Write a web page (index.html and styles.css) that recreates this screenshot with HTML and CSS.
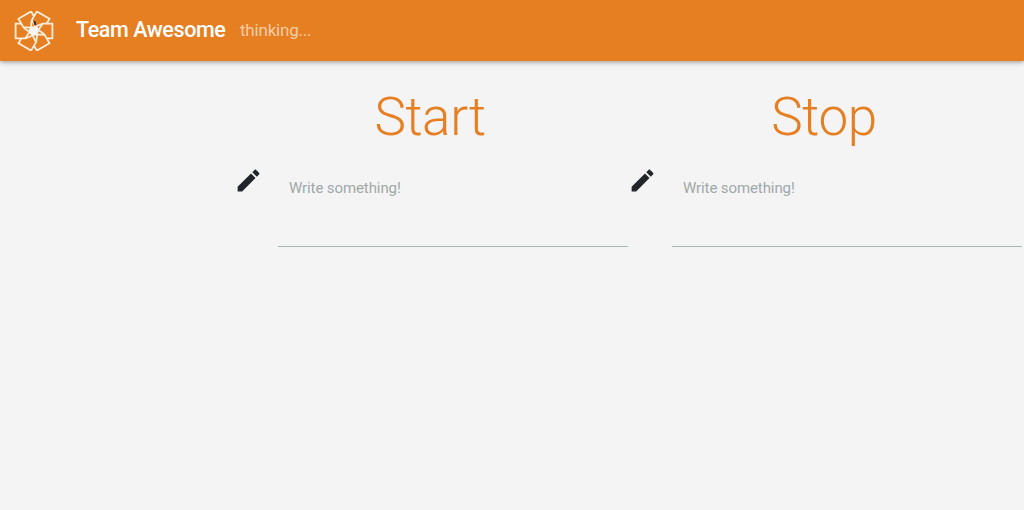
FILE: index.html
```html
<!DOCTYPE html>
<html lang="en">
<head>
    <meta charset="UTF-8">
    <meta name="viewport" content="width=device-width, initial-scale=1.0">
    <title>Team Awesome</title>
    <link rel="stylesheet" href="styles.css">
</head>
<body>
    <header class="toolbar">
        <svg class="logo" viewBox="-20 -20 40 40">
            <defs>
                <path id="blade" d="M-12.6-7.3H-18.4V7.3H-8.6L-4.5 1L-10.3-3.3"/>
            </defs>
            <g class="blades">
                <use href="#blade"/>
                <use href="#blade" transform="rotate(60)"/>
                <use href="#blade" transform="rotate(120)"/>
                <use href="#blade" transform="rotate(180)"/>
                <use href="#blade" transform="rotate(240)"/>
                <use href="#blade" transform="rotate(300)"/>
            </g>
            <path class="hub" d="M-5-2L-2-5L1-4L4-4L5 0L3 4L-1 5L-5 2Z"/>
            <path class="hand" d="M-.8-10.5L1.6-9.5L2.2-5.5L.2-6Z"/>
        </svg>
        <h1 class="team-name">Team Awesome</h1>
        <span class="status">thinking...</span>
    </header>

    <main class="columns">
        <section class="column">
            <h2>Start</h2>
            <form class="note-form">
                <svg class="pencil" viewBox="0 0 24 24"><path d="M3 17.25V21h3.75L17.81 9.94l-3.75-3.75L3 17.25zM20.71 7.04c.39-.39.39-1.02 0-1.41l-2.34-2.34c-.39-.39-1.02-.39-1.41 0l-1.83 1.83 3.75 3.75 1.83-1.83z"/></svg>
                <textarea class="note" placeholder="Write something!"></textarea>
            </form>
        </section>
        <section class="column">
            <h2>Stop</h2>
            <form class="note-form">
                <svg class="pencil" viewBox="0 0 24 24"><path d="M3 17.25V21h3.75L17.81 9.94l-3.75-3.75L3 17.25zM20.71 7.04c.39-.39.39-1.02 0-1.41l-2.34-2.34c-.39-.39-1.02-.39-1.41 0l-1.83 1.83 3.75 3.75 1.83-1.83z"/></svg>
                <textarea class="note" placeholder="Write something!"></textarea>
            </form>
        </section>
    </main>
</body>
</html>
```

FILE: styles.css
```css
body {
    margin: 0;
    height: 510px;
    overflow: hidden;
    background: #f5f4f5;
    font-family: Roboto, sans-serif;
}

.toolbar {
    display: flex;
    align-items: center;
    height: 61px;
    padding-left: 14px;
    background: #e67e22;
    box-shadow: 0 1px 5px rgba(0, 0, 0, 0.4);
}

.logo {
    width: 40px;
    height: 40px;
    margin-top: 1px;
}

.blades {
    fill: none;
    stroke: #fdeedb;
    stroke-width: 1.8;
}

.hub {
    fill: #f8f6f4;
}

.hand {
    fill: #3a2a20;
}

.team-name {
    width: 149px;
    margin: 0 15px 2px 22px;
    color: #fff;
    font-size: 21.5px;
    font-weight: 500;
    letter-spacing: -0.4px;
    white-space: nowrap;
}

.status {
    margin-bottom: 1px;
    color: #f6cda6;
    font-size: 17px;
    letter-spacing: -0.2px;
}

.columns {
    display: flex;
    padding-left: 234px;
}

.column {
    flex: none;
    width: 394px;
}

.column h2 {
    margin: 24px 0 20px;
    padding-right: 2px;
    color: #e67e22;
    font-size: 53px;
    font-weight: 300;
    line-height: 65px;
    letter-spacing: -0.4px;
    text-align: center;
}

.note-form {
    display: flex;
    align-items: flex-start;
}

.pencil {
    width: 29px;
    height: 29px;
    margin: -4px 15px 0 0;
    fill: #22262b;
}

.note {
    box-sizing: border-box;
    width: 350px;
    height: 77px;
    padding: 9px 11px;
    border: 0;
    border-bottom: 1px solid #a9b6b8;
    background: transparent;
    font-family: Roboto, sans-serif;
    font-size: 15px;
    letter-spacing: -0.1px;
    resize: none;
    outline: none;
}

.note::placeholder {
    color: #9fa8a8;
}
```
